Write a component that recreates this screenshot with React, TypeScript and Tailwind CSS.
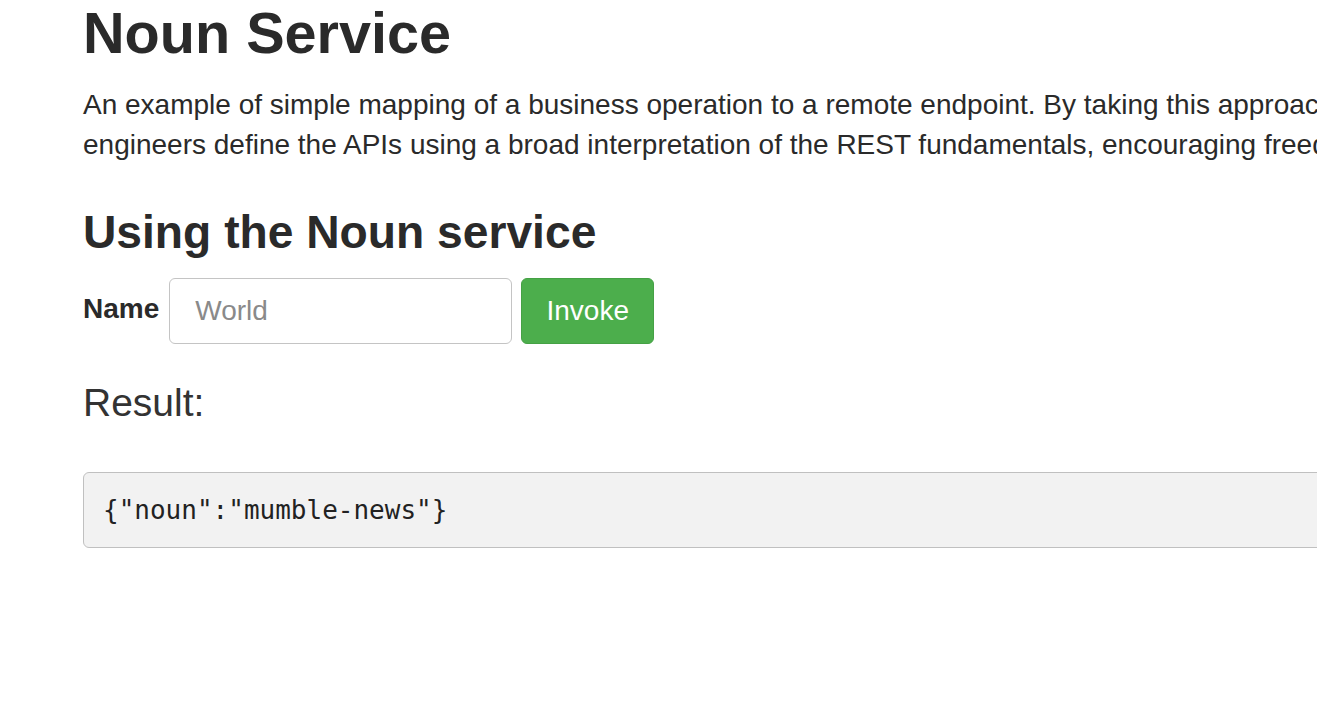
export default function App() {
  return (
    <div className="w-full min-h-screen overflow-hidden bg-white text-[#2a2a2a] font-['Liberation_Sans',Arial,sans-serif]">
      <div className="ml-[83px] w-[1340px]">
        <h1 className="text-[57.6px] leading-[66px] font-bold">Noun Service</h1>
        <p className="mt-[19px] text-[28px] leading-[40px]">
          An example of simple mapping of a business operation to a remote endpoint. By taking this approach,
          engineers define the APIs using a broad interpretation of the REST fundamentals, encouraging freedom.
        </p>

        <h2 className="mt-[42px] text-[46.2px] leading-[51px] font-bold">Using the Noun service</h2>

        <form className="mt-[20px] flex items-center" onSubmit={(e) => e.preventDefault()}>
          <label htmlFor="name" className="mb-[5px] mr-[10px] text-[28px] leading-none font-bold">
            Name
          </label>
          <input
            id="name"
            type="text"
            placeholder="World"
            className="h-[66px] w-[343px] rounded-[6px] border border-[#c4c4c4] bg-white px-[25px] text-[28px] text-[#333] placeholder:text-[#8a8a8a] outline-none"
          />
          <button
            type="submit"
            className="ml-[9px] h-[66px] w-[133px] rounded-[6px] border border-[#45a145] bg-[#4cae4c] text-[28px] text-white"
          >
            Invoke
          </button>
        </form>

        <h3 className="mt-[37px] text-[39px] leading-[44px] font-light text-[#333]">Result:</h3>

        <pre className="mt-[47px] rounded-[6px] border border-[#c0c0c0] bg-[#f2f2f2] px-[19px] py-[18px] text-[26px] leading-[38px] text-[#222] font-['DejaVu_Sans_Mono',Menlo,monospace]">
          {'{"noun":"mumble-news"}'}
        </pre>
      </div>
    </div>
  );
}
